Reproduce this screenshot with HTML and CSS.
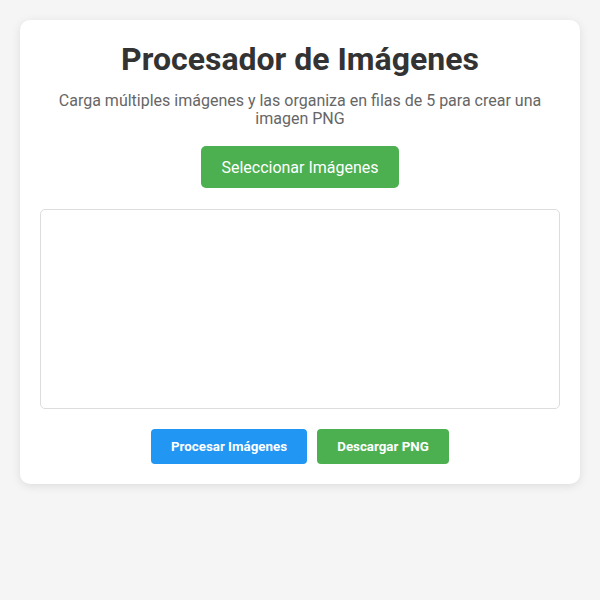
FILE: index.html
```html
<!DOCTYPE html>
<html lang="es">
<head>
<meta charset="utf-8">
<title>Procesador de Imágenes</title>
<link rel="stylesheet" href="styles.css">
</head>
<body>
<div class="card">
  <h1 class="title">Procesador de Imágenes</h1>
  <p class="subtitle">Carga múltiples imágenes y las organiza en filas de 5 para crear una imagen PNG</p>
  <button class="btn-select">Seleccionar Imágenes</button>
  <div class="preview"></div>
  <div class="actions">
    <button class="btn-action btn-blue">Procesar Imágenes</button>
    <button class="btn-action btn-green">Descargar PNG</button>
  </div>
</div>
</body>
</html>
```
FILE: styles.css
```css
html, body {
  margin: 0;
  padding: 0;
}
body {
  background: #f5f5f5;
  font-family: Roboto, "Liberation Sans", sans-serif;
  padding: 20px;
}
.card {
  background: #fff;
  border-radius: 10px;
  box-shadow: 0 2px 10px rgba(0,0,0,0.1);
  padding: 20px;
  display: flex;
  flex-direction: column;
  align-items: center;
}
.title {
  margin: 0;
  font-size: 32px;
  font-weight: 700;
  color: #333;
  text-align: center;
}
.subtitle {
  margin: 14px 0 18px;
  font-size: 16px;
  color: #666;
  text-align: center;
  line-height: 18px;
}
.btn-select {
  background: #4CAF50;
  color: #fff;
  border: none;
  border-radius: 5px;
  font-family: inherit;
  font-size: 16px;
  padding: 0 20px;
  width: 198px;
  height: 42px;
  white-space: nowrap;
}
.preview {
  align-self: stretch;
  height: 200px;
  box-sizing: border-box;
  border: 1px solid #ddd;
  border-radius: 5px;
  margin-top: 21px;
}
.actions {
  display: flex;
  gap: 10px;
  margin-top: 20px;
}
.btn-action {
  color: #fff;
  border: none;
  border-radius: 4px;
  font-family: inherit;
  font-size: 13.333px;
  font-weight: 700;
  padding: 0 10px;
  height: 35px;
  white-space: nowrap;
}
.btn-blue { background: #2196F3; width: 156px; }
.btn-green { background: #4CAF50; width: 132px; }
```
